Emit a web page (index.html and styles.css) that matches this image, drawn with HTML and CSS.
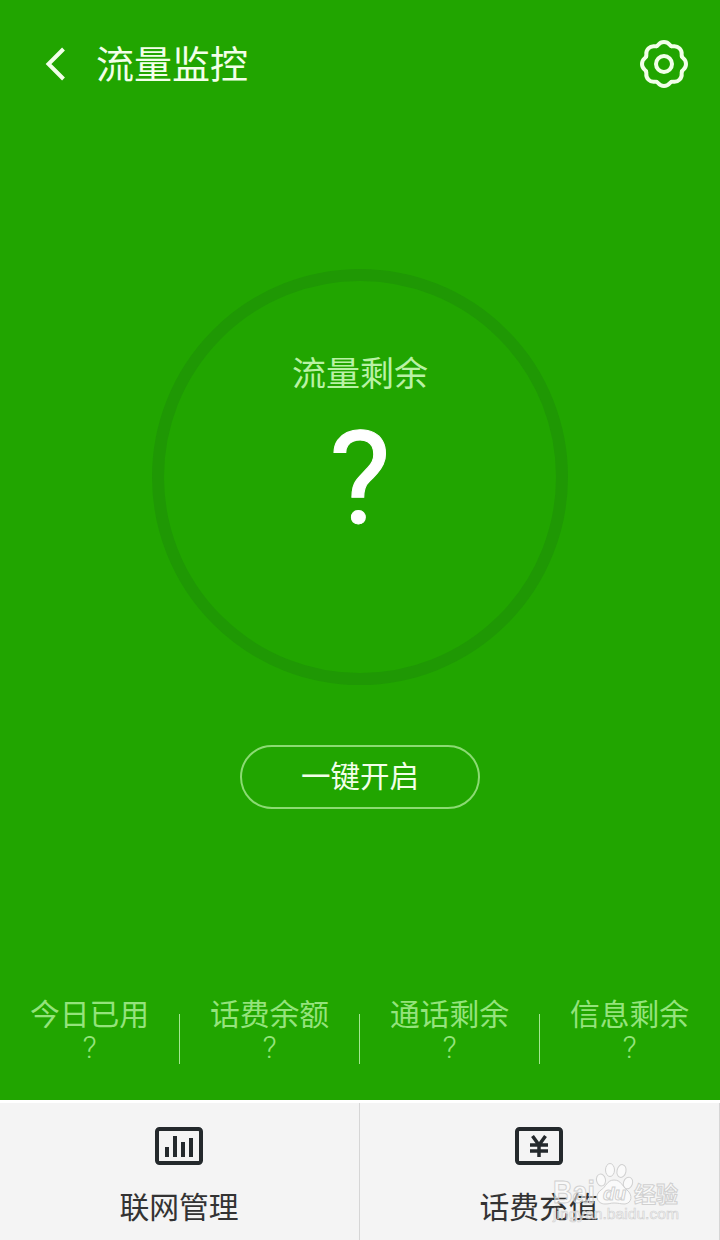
FILE: index.html
```html
<!DOCTYPE html>
<html lang="zh-CN">
<head>
  <meta charset="UTF-8">
  <title>流量监控</title>
  <link rel="stylesheet" href="styles.css">
</head>
<body>

  <header class="topbar">
    <svg class="back" width="20" height="34" viewBox="0 0 20 34">
      <path d="M18.500 2 L3.500 17 L18.500 32" />
    </svg>
    <h1>流量监控</h1>
    <svg class="gear" width="50" height="50" viewBox="-25 -25 50 50">
      <defs>
        <path id="tooth" d="M-7.4 -17.9 C-5.4 -18.4 -5.4 -22 0 -22 C5.4 -22 5.4 -18.4 7.4 -17.9" />
      </defs>
      <use href="#tooth" />
      <use href="#tooth" transform="rotate(45)" />
      <use href="#tooth" transform="rotate(90)" />
      <use href="#tooth" transform="rotate(135)" />
      <use href="#tooth" transform="rotate(180)" />
      <use href="#tooth" transform="rotate(225)" />
      <use href="#tooth" transform="rotate(270)" />
      <use href="#tooth" transform="rotate(315)" />
      <circle r="8" />
    </svg>
  </header>

  <main>
    <div class="ring">
      <p class="ring-label">流量剩余</p>
      <p class="ring-value">?</p>
    </div>
    <button class="open-btn">一键开启</button>
  </main>

  <!-- Resumo -->
  <ul class="stats">
    <li><span>今日已用</span><b>?</b></li>
    <li><span>话费余额</span><b>?</b></li>
    <li><span>通话剩余</span><b>?</b></li>
    <li><span>信息剩余</span><b>?</b></li>
  </ul>

  <footer class="tabs">
    <div class="tab">
      <svg width="48" height="38" viewBox="0 0 48 38">
        <rect class="frame" x="2" y="2" width="44" height="34" rx="2.5" />
        <path class="bars" d="M10 20h4v10h-4z M18 9h4v21h-4z M26 15h4v15h-4z M34 11h4v19h-4z" />
      </svg>
      <span>联网管理</span>
    </div>
    <div class="tab">
      <svg width="48" height="38" viewBox="0 0 48 38">
        <rect class="frame" x="2" y="2" width="44" height="34" rx="2.5" />
        <path class="yen" d="M17.5 9 L24 18 L30.500 9 M24 17 V30 M15 18H33 M15 24H33" />
      </svg>
      <span>话费充值</span>
    </div>
    <svg class="watermark" width="140" height="68" viewBox="0 0 140 68">
      <g class="mark">
        <text class="bai" x="3" y="42" textLength="42" lengthAdjust="spacingAndGlyphs">Bai</text>
        <ellipse cx="51" cy="19" rx="4.500" ry="6" transform="rotate(-12 51 19)" />
        <ellipse cx="60" cy="9" rx="4.500" ry="6.500" />
        <ellipse cx="71.500" cy="10" rx="4.500" ry="6.500" transform="rotate(12 71.500 10)" />
        <ellipse cx="78" cy="22" rx="4.500" ry="6" transform="rotate(20 78 22)" />
        <path d="M64 19 C57 19 56 26 51 29 C44 34 47 43 55 43 C60 43 60 42 64 42 C69 42 70 43 75 43 C82 42 83 34 77 29 C72 25 71 19 64 19z" />
        <text class="du" x="53" y="39">du</text>
        <text class="jy" x="84" y="41">经验</text>
        <text class="site" x="3" y="58" textLength="126" lengthAdjust="spacingAndGlyphs">jingyan.baidu.com</text>
      </g>
    </svg>
  </footer>

</body>
</html>
```
FILE: styles.css
```css
* { box-sizing: border-box; margin: 0; padding: 0; }
body {
  width: 720px;
  height: 1240px;
  display: flex;
  flex-direction: column;
  overflow: hidden;
  background: #21a500;
  color: #fff;
  font-family: "Noto Sans CJK SC", sans-serif;
}
.topbar {
  height: 128px;
  display: flex;
  align-items: center;
  padding: 0 31px 0 45px;
}
.topbar h1 {
  flex: 1;
  margin-left: 31px;
  padding-bottom: 5px;
  font-size: 38px;
  line-height: 56px;
  font-weight: 400;
  color: #f2ffe9;
}
.back, .gear { fill: none; stroke: #f2ffe9; stroke-width: 4; }
.gear { stroke-linecap: round; }
main {
  flex: 1;
  display: flex;
  flex-direction: column;
  align-items: center;
  padding-top: 141px;
}
.ring {
  width: 416px;
  height: 416px;
  border: 12px solid #1f9804;
  border-radius: 50%;
  padding-top: 66px;
  text-align: center;
}
.ring-label { font-size: 34px; line-height: 50px; color: #b9f2a5; }
.ring-value {
  font: 130px/150px Roboto, sans-serif;
  -webkit-text-stroke: 1px #fff;
  margin-top: 7px;
}
.open-btn {
  width: 240px;
  height: 64px;
  margin-top: 60px;
  padding-bottom: 6px;
  border: 2px solid #8bdb72;
  border-radius: 32px;
  background: none;
  color: #f2ffe9;
  font: inherit;
  font-size: 29.5px;
}
.stats {
  height: 110px;
  display: grid;
  grid-template-columns: repeat(4, 1fr);
  list-style: none;
  text-align: center;
  color: #94e37c;
}
.stats li {
  display: flex;
  flex-direction: column;
  background: linear-gradient(#a5e892, #a5e892) right 24px / 1px 50px no-repeat;
}
.stats li:last-child { background: none; }
.stats span { font-size: 29.8px; line-height: 44px; margin-right: 1px; }
.stats b {
  font: 300 31px/28px Roboto, sans-serif;
  margin-right: 1px;
}
.tabs {
  position: relative;
  height: 140px;
  display: grid;
  grid-template-columns: 1fr 1fr;
  background: #f4f4f4;
  border-top: 3px solid #fff;
}
.tab {
  display: flex;
  flex-direction: column;
  align-items: center;
  padding: 24px 1px 0 0;
  border-right: 1px solid #d6d6d6;
  color: #333;
  font-size: 29.8px;
  line-height: 44px;
}
.tab span { margin-top: 18px; }
.frame { fill: none; stroke: #24292c; stroke-width: 4; }
.bars { fill: #24292c; }
.yen { fill: none; stroke: #24292c; stroke-width: 3.5; }

/* Marca d'água sobre o rodapé */
.watermark { position: absolute; left: 550px; top: 58px; }
.mark {
  fill: rgba(255, 255, 255, .5);
  stroke: #d0d0d0;
  stroke-width: 1;
  font-family: "Liberation Sans", "Noto Sans CJK SC", sans-serif;
  font-weight: bold;
}
.bai { font-size: 31px; }
.du { font-size: 19px; font-style: italic; }
.jy { font-size: 22px; }
.site { font-size: 15px; font-weight: normal; stroke-width: .6; }
```
